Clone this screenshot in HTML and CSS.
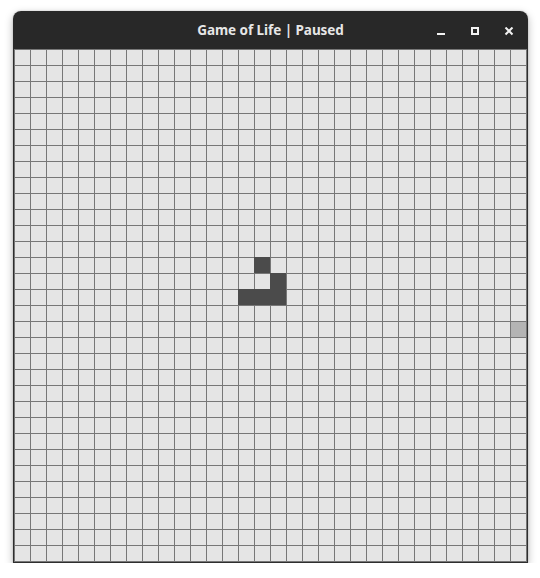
FILE: index.html
```html
<!DOCTYPE html>
<html lang="en">
<head>
<meta charset="utf-8">
<title>Game of Life | Paused</title>
<link rel="stylesheet" href="styles.css">
</head>
<body>
<div class="window">
  <header class="titlebar">
    <div class="spacer"></div>
    <div class="title">Game of Life | Paused</div>
    <div class="controls">
      <button class="ctl" aria-label="Minimize">
        <svg width="10" height="10" viewBox="0 0 10 10"><rect x="1" y="6" width="8" height="2" fill="currentColor"/></svg>
      </button>
      <button class="ctl" aria-label="Maximize">
        <svg width="10" height="10" viewBox="0 0 10 10"><rect x="2" y="1" width="6" height="6" fill="none" stroke="currentColor" stroke-width="2"/></svg>
      </button>
      <button class="ctl" aria-label="Close">
        <svg width="10" height="10" viewBox="0 0 10 10"><path d="M1.5 0.5 L8.5 7.5 M8.5 0.5 L1.5 7.5" stroke="currentColor" stroke-width="2"/></svg>
      </button>
    </div>
  </header>
  <div class="frame">
    <div class="board">
      <div class="cell alive" style="grid-column:16;grid-row:14"></div>
      <div class="cell alive" style="grid-column:17;grid-row:15"></div>
      <div class="cell alive" style="grid-column:15;grid-row:16"></div>
      <div class="cell alive" style="grid-column:16;grid-row:16"></div>
      <div class="cell alive" style="grid-column:17;grid-row:16"></div>
      <div class="cell hover" style="grid-column:32;grid-row:18"></div>
    </div>
  </div>
</div>
</body>
</html>
```

FILE: styles.css
```css
html, body {
  margin: 0;
  padding: 0;
  background: #ffffff;
}
body {
  padding: 11px 0 0 13px;
  font-family: "Noto Sans", "DejaVu Sans", sans-serif;
}
.window {
  width: 515px;
  border-radius: 8px 8px 0 0;
  box-shadow: 0 3px 9px rgba(0, 0, 0, 0.28), 0 0 2px rgba(0, 0, 0, 0.2);
}
.titlebar {
  height: 38px;
  background: #282828;
  border-radius: 8px 8px 0 0;
  display: grid;
  grid-template-columns: 1fr auto 1fr;
  align-items: center;
}
.title {
  color: #e6e6e6;
  font-weight: 700;
  font-size: 13.5px;
  letter-spacing: -0.05px;
}
.controls {
  display: flex;
  justify-content: flex-end;
  gap: 10px;
  padding-right: 7px;
}
.ctl {
  width: 24px;
  height: 24px;
  padding: 0;
  border: 0;
  background: transparent;
  color: #f2f2f2;
  display: flex;
  align-items: center;
  justify-content: center;
}
.ctl svg {
  display: block;
  margin-top: 3px;
}
.frame {
  border: 1px solid #2e2e2e;
  border-top: 0;
  width: 513px;
}
.board {
  width: 512px;
  height: 512px;
  border-right: 1px solid #777777;
  border-bottom: 1px solid #777777;
  background-color: #e5e5e5;
  background-image:
    linear-gradient(to right, #777777 1px, transparent 1px),
    linear-gradient(to bottom, #777777 1px, transparent 1px);
  background-size: 16px 16px;
  display: grid;
  grid-template-columns: repeat(32, 16px);
  grid-template-rows: repeat(32, 16px);
}
.cell.alive {
  background: #4b4b4b;
}
.cell.hover {
  background: #b4b4b4;
  margin: 1px 0 0 1px;
}
```
